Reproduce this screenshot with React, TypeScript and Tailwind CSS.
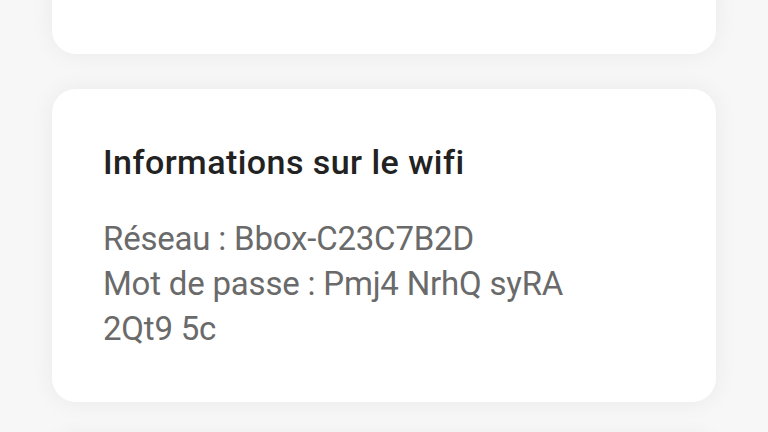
export default function App() {
  return (
    <div
      className="w-[768px] h-[432px] overflow-hidden bg-[#f7f7f7] px-[52px]"
      style={{ fontFamily: "Roboto, 'Noto Sans', sans-serif" }}
    >
      <div className="flex flex-col gap-[35px] -mt-[50px]">
        {/* previous card, cut off at top */}
        <div className="h-[104px] rounded-[24px] bg-white shadow-[0_0_24px_rgba(0,0,0,0.06)]" />

        <div className="h-[313px] rounded-[24px] bg-white shadow-[0_0_24px_rgba(0,0,0,0.06)] px-[51px] pt-[52px]">
          <h2 className="text-[34px] leading-[42px] font-medium text-[#222222] tracking-[0.45px]">
            Informations sur le wifi
          </h2>
          <p className="mt-[33px] max-w-[500px] text-[33px] leading-[45px] text-[#6a6a6a] tracking-[-0.2px]">
            Réseau : Bbox-C23C7B2D
            <br />
            Mot de passe : Pmj4 NrhQ syRA 2Qt9 5c
          </p>
        </div>

        <div className="h-[300px] rounded-[24px] bg-white shadow-[0_0_24px_rgba(0,0,0,0.06)]" />
      </div>
    </div>
  )
}
